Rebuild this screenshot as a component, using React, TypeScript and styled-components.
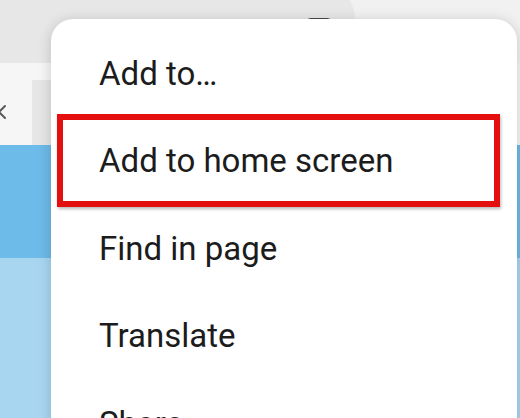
import React from "react";
import styled, {createGlobalStyle} from "styled-components";

const GlobalStyle = createGlobalStyle`
  html, body {
    margin: 0;
    padding: 0;
    width: 520px;
    height: 418px;
    overflow: hidden;
    background: #ffffff;
  }
  * {
    box-sizing: border-box;
  }
`

const Page = styled.div`
  position: relative;
  width: 520px;
  height: 418px;
  overflow: hidden;
  display: flex;
  flex-direction: column;
  font-family: Roboto, "Noto Sans", sans-serif;
`

const Toolbar = styled.div`
  height: 63px;
  flex-shrink: 0;
  display: flex;
  align-items: center;
  background: #f1f1f1;
`

const AddressPill = styled.div`
  flex-shrink: 0;
  width: 396px;
  height: 80px;
  margin: -18px 0 0 -41px;
  border-radius: 36px;
  background: #e7e7e7;
  display: flex;
  align-items: center;
  justify-content: flex-end;
  padding: 18px 22px 0 0;
`

const TabCount = styled.div`
  width: 28px;
  height: 28px;
  border: 3px solid #4a4a4a;
  border-radius: 6px;
`

const ToolIcon = styled.div<{$gap: number}>`
  display: flex;
  margin-left: ${p => p.$gap}px;
`

const TabStrip = styled.div`
  height: 82px;
  flex-shrink: 0;
  display: flex;
  align-items: flex-end;
  background: #f6f6f6;
`

const CloseTab = styled.div`
  width: 32px;
  height: 82px;
  display: flex;
  align-items: center;
  padding-top: 15px;
  margin-left: -11px;
`

const TabChip = styled.div`
  width: 80px;
  height: 65px;
  margin-left: 11px;
  background: #e6e6e6;
`

const Hero = styled.div`
  height: 113px;
  flex-shrink: 0;
  background: #6cbbe8;
`

const Lower = styled.div`
  flex: 1;
  background: #a8d6f1;
`

const Menu = styled.div`
  position: absolute;
  left: 51px;
  top: 19px;
  width: 466px;
  height: 480px;
  padding-top: 11px;
  border-radius: 22px;
  background: #ffffff;
  box-shadow: 0 2px 14px rgba(0, 0, 0, 0.18);
  display: flex;
  flex-direction: column;
`

const MenuItem = styled.div<{$marked?: boolean}>`
  position: relative;
  height: 87.5px;
  flex-shrink: 0;
  display: flex;
  align-items: center;
  padding-left: 48px;
  font-size: 33px;
  line-height: 40px;
  color: #1c1c1c;

  ${p => p.$marked && `
    &::after {
      content: "";
      position: absolute;
      left: 6px;
      right: 17px;
      top: -4px;
      bottom: -2px;
      border: 6px solid #e3100f;
      box-shadow: 1px 2px 3px rgba(0, 0, 0, 0.28);
    }
  `}
`

const items = ["Add to…", "Add to home screen", "Find in page", "Translate", "Share"]

export default function App() {
  return (
    <Page>
      <GlobalStyle />
      <Toolbar>
        <AddressPill>
          <TabCount />
        </AddressPill>
        <ToolIcon $gap={53}>
          <svg width="4" height="40" viewBox="0 0 4 40">
            <rect x="0.5" y="11" width="3" height="28" rx="1.5" fill="#2b2b2b" />
          </svg>
        </ToolIcon>
        <ToolIcon $gap={64}>
          <svg width="10" height="40" viewBox="0 0 10 40">
            <circle cx="5" cy="19" r="3.5" fill="#2b2b2b" />
            <circle cx="5" cy="30" r="3.5" fill="#2b2b2b" />
          </svg>
        </ToolIcon>
        <ToolIcon $gap={9}>
          <svg width="10" height="50" viewBox="0 0 10 50">
            <circle cx="5" cy="18" r="3.5" fill="#1f1f1f" />
            <circle cx="5" cy="31" r="3.5" fill="#1f1f1f" />
            <circle cx="5" cy="44" r="3.5" fill="#1f1f1f" />
          </svg>
        </ToolIcon>
      </Toolbar>
      <TabStrip>
        <CloseTab>
          <svg width="20" height="20" viewBox="0 0 20 20">
            <path d="M4 4 L16 16 M16 4 L4 16" stroke="#5a5a5a" strokeWidth="2" strokeLinecap="round" />
          </svg>
        </CloseTab>
        <TabChip />
      </TabStrip>
      <Hero />
      <Lower />
      <Menu>
        {items.map((label, i) => (
          <MenuItem key={label} $marked={i === 1}>{label}</MenuItem>
        ))}
      </Menu>
    </Page>
  )
}
